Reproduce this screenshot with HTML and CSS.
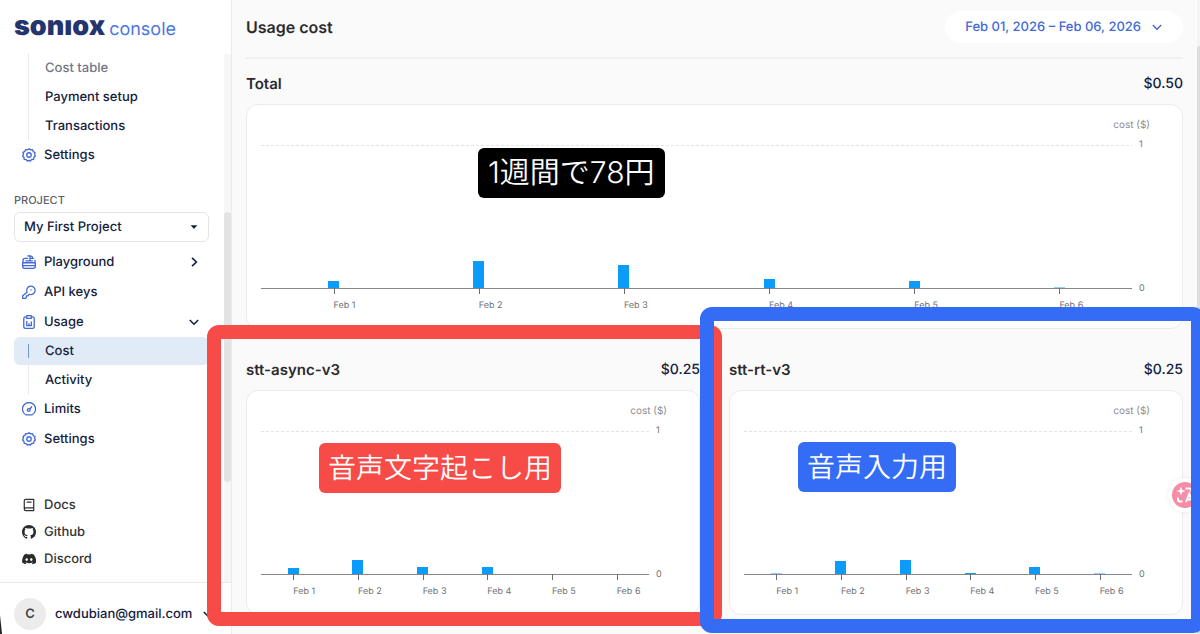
FILE: index.html
```html
<!DOCTYPE html>
<html lang="en">
<head>
<meta charset="utf-8">
<meta name="viewport" content="width=device-width, initial-scale=1">
<title>Soniox Console – Usage cost</title>
<link rel="stylesheet" href="styles.css">
</head>
<body>
<svg class="sprite" aria-hidden="true">
  <symbol id="i-gear" viewBox="0.500 0.500 15 15"><path d="M8 1.200 9.700 2.500 11.900 2.300 12.500 4.300 14.500 5.300 13.900 7.300 14.900 9.100 13.300 10.500 12.900 12.600 10.800 12.800 9.400 14.600 8 13.700 6.300 14.600 5 12.900 2.900 12.600 2.600 10.500 1.100 9 2.100 7.200 1.600 5.200 3.600 4.200 4.300 2.300 6.400 2.500Z"/><circle cx="8" cy="8" r="2.400"/></symbol>
  <symbol id="i-play" viewBox="0.500 0.500 15 15"><path d="M1.200 8.800h13.600v3.800q0 2.200-2.200 2.200H3.400q-2.200 0-2.200-2.200ZM1.200 11.900h13.600M1.600 8.600V6.400q0-2.200 2.200-2.200h2.600M14.400 8.600V6M4.600 6.700h7M9 6.500V2.200M6.600 1.500H9.400q2.200 0 2.800 2.400M9 4.200h3.600"/></symbol>
  <symbol id="i-key" viewBox="0.500 0.500 15 15"><path d="M6 8.200A4.500 4.500 0 1 1 8.400 10.400L6.600 12.200H5.200v1.400l-1 1.200H1.200v-2.800Z"/><path d="M10.200 5.800h.1"/></symbol>
  <symbol id="i-clip" viewBox="0.500 0.500 15 15"><path d="M5.400 2.600H4.200q-1.800 0-1.800 1.800V13q0 1.800 1.800 1.800h7.600q1.800 0 1.800-1.800V4.400q0-1.800-1.800-1.800h-1.200M5.600 1.200h4.800v3H5.600Z"/><path d="M5.600 7.400v4.400h5M8 11.600V9.800M10.500 11.600V8"/></symbol>
  <symbol id="i-gauge" viewBox="0.500 0.500 15 15"><path d="M4.600 14.200A7 7 0 1 1 11.400 14.200ZM9 8 10.800 5.600"/><circle cx="7.700" cy="9" r="1.500"/></symbol>
  <symbol id="i-docs" viewBox="0 0 16 16"><path d="M2.600 12.600V3.200q0-1.600 1.600-1.600h9.200v12.800H4.300q-1.700 0-1.700-1.600 0-1.600 1.700-1.600h9M5.800 4.600h4.600"/></symbol>
  <symbol id="i-github" viewBox="0 0 16 16"><path d="M8 0C3.580 0 0 3.580 0 8c0 3.540 2.290 6.530 5.470 7.590.4.070.55-.17.55-.38 0-.19-.01-.82-.01-1.490-2.010.37-2.530-.49-2.690-.94-.09-.23-.48-.94-.82-1.130-.28-.15-.68-.52-.01-.53.63-.01 1.080.58 1.230.82.72 1.210 1.870.87 2.330.66.07-.52.28-.87.51-1.070-1.780-.2-3.640-.89-3.640-3.950 0-.87.31-1.590.82-2.150-.08-.2-.36-1.020.08-2.120 0 0 .67-.21 2.200.82.64-.18 1.320-.27 2-.27s1.360.09 2 .27c1.530-1.040 2.200-.82 2.200-.82.44 1.100.16 1.920.08 2.120.51.56.82 1.270.82 2.150 0 3.070-1.870 3.750-3.650 3.950.29.25.54.73.54 1.480 0 1.070-.01 1.930-.01 2.200 0 .21.15.46.55.38A8 8 0 0 0 16 8c0-4.420-3.580-8-8-8Z"/></symbol>
  <symbol id="i-discord" viewBox="0 0 16 16"><path fill-rule="evenodd" d="M13.550 3.010A13.200 13.200 0 0 0 10.290 2l-.42.850a12.200 12.200 0 0 0-3.660 0L5.790 2a13.200 13.200 0 0 0-3.270 1.010C.46 6.100-.1 9.110.18 12.070a13.300 13.300 0 0 0 4 2.020l.86-1.400-1.270-.61.32-.25a9.500 9.500 0 0 0 8.130 0l.32.25-1.280.61.86 1.400a13.200 13.200 0 0 0 4-2.020c.33-3.430-.56-6.410-2.570-9.060ZM5.350 10.260c-.78 0-1.420-.72-1.420-1.600s.62-1.610 1.420-1.610 1.440.72 1.420 1.610c0 .88-.63 1.600-1.420 1.600Zm5.280 0c-.78 0-1.420-.72-1.420-1.600s.62-1.610 1.420-1.610 1.440.72 1.420 1.610c0 .88-.62 1.600-1.420 1.600Z"/></symbol>
  <symbol id="i-right" viewBox="0 0 12 12"><path d="M4 1.800 8.400 6 4 10.200"/></symbol>
  <symbol id="i-down" viewBox="0 0 12 12"><path d="M1.800 4 6 8.200 10.200 4"/></symbol>
  <symbol id="i-caret" viewBox="0 0 12 12"><path d="M2 4h8L6 8.500Z"/></symbol>
</svg>

<div class="page">
  <aside class="sidebar">
    <a class="brand" href="#"><span class="brand-name">sonıox</span><span class="brand-sub">console</span></a>
    <nav class="nav">
      <div class="sub">
        <a class="sub-item muted" href="#">Cost table</a>
        <a class="sub-item" href="#">Payment setup</a>
        <a class="sub-item" href="#">Transactions</a>
      </div>
      <a class="item" href="#"><svg class="icon"><use href="#i-gear"/></svg>Settings</a>

      <label class="group" for="project">PROJECT</label>
      <div class="picker">
        <select id="project"><option>My First Project</option></select>
        <svg class="caret"><use href="#i-caret"/></svg>
      </div>
      <a class="item" href="#"><svg class="icon"><use href="#i-play"/></svg>Playground<svg class="chev"><use href="#i-right"/></svg></a>
      <a class="item" href="#"><svg class="icon"><use href="#i-key"/></svg>API keys</a>
      <a class="item" href="#"><svg class="icon"><use href="#i-clip"/></svg>Usage<svg class="chev"><use href="#i-down"/></svg></a>
      <div class="sub">
        <a class="sub-item active" href="#">Cost</a>
        <a class="sub-item" href="#">Activity</a>
      </div>
      <a class="item" href="#"><svg class="icon"><use href="#i-gauge"/></svg>Limits</a>
      <a class="item" href="#"><svg class="icon"><use href="#i-gear"/></svg>Settings</a>
    </nav>
    <div class="links">
      <a class="link" href="#"><svg class="icon line"><use href="#i-docs"/></svg>Docs</a>
      <a class="link" href="#"><svg class="icon solid"><use href="#i-github"/></svg>Github</a>
      <a class="link" href="#"><svg class="icon solid"><use href="#i-discord"/></svg>Discord</a>
    </div>
    <button class="user" type="button"><span class="avatar">C</span><span>cwdubian@gmail.com</span><svg class="chev"><use href="#i-down"/></svg></button>
    <div class="track"><div class="thumb"></div></div>
  </aside>

  <main class="main">
    <header class="header">
      <h1>Usage cost</h1>
      <button class="range" type="button">Feb 01, 2026 – Feb 06, 2026<svg class="range-chev"><use href="#i-down"/></svg></button>
    </header>

    <div class="charts">
      <section class="panel wide">
        <div class="panel-head"><h2>Total</h2><span class="sum">$0.50</span></div>
        <div class="card">
          <div class="unit">cost ($)</div>
          <div class="plot">
            <div class="bars">
              <div class="slot"><div class="bar" style="height:5%"></div></div>
              <div class="slot"><div class="bar" style="height:19%"></div></div>
              <div class="slot"><div class="bar" style="height:16%"></div></div>
              <div class="slot"><div class="bar" style="height:6%"></div></div>
              <div class="slot"><div class="bar" style="height:5%"></div></div>
              <div class="slot"><div class="bar faint" style="height:1%"></div></div>
            </div>
            <div class="scale"><span>1</span><span>0</span></div>
            <div class="days"><span>Feb 1</span><span>Feb 2</span><span>Feb 3</span><span>Feb 4</span><span>Feb 5</span><span>Feb 6</span></div>
          </div>
        </div>
      </section>

      <section class="panel">
        <div class="panel-head"><h2>stt-async-v3</h2><span class="sum">$0.25</span></div>
        <div class="card">
          <div class="unit">cost ($)</div>
          <div class="plot">
            <div class="bars">
              <div class="slot"><div class="bar" style="height:4%"></div></div>
              <div class="slot"><div class="bar" style="height:10%"></div></div>
              <div class="slot"><div class="bar" style="height:5%"></div></div>
              <div class="slot"><div class="bar" style="height:5%"></div></div>
              <div class="slot"><div class="bar" style="height:0"></div></div>
              <div class="slot"><div class="bar" style="height:0"></div></div>
            </div>
            <div class="scale"><span>1</span><span>0</span></div>
            <div class="days"><span>Feb 1</span><span>Feb 2</span><span>Feb 3</span><span>Feb 4</span><span>Feb 5</span><span>Feb 6</span></div>
          </div>
        </div>
      </section>

      <section class="panel">
        <div class="panel-head"><h2>stt-rt-v3</h2><span class="sum">$0.25</span></div>
        <div class="card">
          <div class="unit">cost ($)</div>
          <div class="plot">
            <div class="bars">
              <div class="slot"><div class="bar faint" style="height:1%"></div></div>
              <div class="slot"><div class="bar" style="height:9%"></div></div>
              <div class="slot"><div class="bar" style="height:10%"></div></div>
              <div class="slot"><div class="bar" style="height:1%"></div></div>
              <div class="slot"><div class="bar" style="height:5%"></div></div>
              <div class="slot"><div class="bar faint" style="height:1%"></div></div>
            </div>
            <div class="scale"><span>1</span><span>0</span></div>
            <div class="days"><span>Feb 1</span><span>Feb 2</span><span>Feb 3</span><span>Feb 4</span><span>Feb 5</span><span>Feb 6</span></div>
          </div>
        </div>
      </section>
    </div>
  </main>

  <div class="page-track"><div class="page-thumb"></div></div>
  <button class="translate" type="button" aria-label="Translate">
    <svg viewBox="0 0 26 26"><circle cx="13" cy="13" r="13"/><path class="spark" d="M9 4.500 10.200 7.900 13.600 9 10.200 10.200 9 13.600 7.800 10.200 4.400 9 7.800 7.900Z"/><path d="M13.500 6.500h4q2 0 2 2v1.500M6 15.500v2q0 2 2 2h2.500M14 20 17.300 11.800 20.600 20M15.200 17.400h4.200"/></svg>
  </button>
  <div class="corner"></div>
  <div class="frame frame-red"></div>
  <div class="frame frame-blue"></div>
  <div class="note note-black" lang="ja">1週間で78円</div>
  <div class="note note-red" lang="ja">音声文字起こし用</div>
  <div class="note note-blue" lang="ja">音声入力用</div>
</div>
</body>
</html>
```

FILE: styles.css
```css
* { box-sizing: border-box; }
body {
  margin: 0;
  font-family: Inter, "Noto Sans", sans-serif;
  font-size: 13px;
  font-weight: 500;
  color: #14213d;
  background: #fafafa;
  text-rendering: geometricPrecision;
}
a { color: inherit; text-decoration: none; }
button, select { font: inherit; color: inherit; margin: 0; cursor: pointer; text-rendering: inherit; }
.sprite { position: absolute; width: 0; height: 0; }

.page { position: relative; display: flex; min-height: 100vh; overflow: hidden; }

/* Sidebar */
.sidebar {
  position: relative;
  flex: none;
  width: 232px;
  display: flex;
  flex-direction: column;
  background: #fff;
  border-right: 1px solid #ebebed;
}
.brand { display: flex; align-items: baseline; gap: 4px; height: 54px; padding: 10px 14px 0; line-height: 32px; }
.brand-name { font-size: 27px; font-weight: 900; color: #25346c; }
.brand-sub { font-size: 18px; font-weight: 400; color: #4d78dc; }
.nav { display: flex; flex-direction: column; padding: 0 22px 0 14px; }
.item { display: flex; align-items: center; gap: 8px; height: 30px; padding: 0 9px 0 8px; }
.icon { width: 14px; height: 14px; fill: none; stroke: #4269d6; stroke-width: 1.4; stroke-linejoin: round; stroke-linecap: round; }
.icon.line { stroke: #333; }
.icon.solid { fill: #2b2b2b; stroke: none; }
.chev { width: 12px; height: 12px; margin-left: auto; fill: none; stroke: #14213d; stroke-width: 1.6; }
.sub {
  display: flex;
  flex-direction: column;
  gap: 1px;
  background: linear-gradient(#e6e7ea, #e6e7ea) 14px 0 / 1px 100% no-repeat;
}
.sub-item { display: flex; align-items: center; height: 28px; padding-left: 31px; border-radius: 6px; }
.sub-item.muted { color: #717784; }
.sub-item.active { background: linear-gradient(#6f9bd4, #6f9bd4) 14px 7px / 1px 14px no-repeat #e1ebf7; }
.group { margin: 22px 0 4px; font-size: 11px; line-height: 16px; color: #5d6068; }
.picker { position: relative; margin-bottom: 5px; }
.picker select { appearance: none; display: block; width: 100%; height: 30px; padding: 0 9px; border: 1px solid #e4e5e9; border-radius: 6px; background: #fff; }
.caret { position: absolute; top: 10px; right: 10px; width: 10px; height: 10px; fill: #14213d; pointer-events: none; }
.links { margin-top: auto; padding: 0 22px 10px; border-bottom: 1px solid #e9e9eb; }
.link { display: flex; align-items: center; gap: 8px; height: 27px; color: #333; }
.user { display: flex; align-items: center; gap: 9px; padding: 15px 17px 4px 14px; border: 0; background: none; }
.avatar { display: grid; place-items: center; width: 32px; height: 32px; border-radius: 50%; background: #ececec; color: #444; font-weight: 600; }
.track { position: absolute; top: 54px; right: 0; bottom: 52px; width: 7px; background: #f6f6f7; }
.thumb { height: 270px; margin-top: 158px; border-radius: 4px; background: #e2e3e4; }

/* Main */
.main { flex: 1; min-width: 0; padding: 0 17px 0 14px; }
.header { display: flex; align-items: center; justify-content: space-between; padding: 11px 0 14px; border-bottom: 2px solid #f0f0f1; }
h1, h2 { margin: 0; font-weight: 600; color: #2b2b2f; }
h1 { font-size: 16px; }
h2 { font-size: 15px; }
.range { display: flex; align-items: center; gap: 10px; height: 32px; padding: 0 20px; border: 0; border-radius: 16px; background: #fff; color: #4269d6; }
.range-chev { width: 12px; height: 12px; fill: none; stroke: #4269d6; stroke-width: 1.4; }
.charts { display: grid; grid-template-columns: 1fr 1fr; gap: 16px 29px; }
.wide { grid-column: 1 / -1; }
.panel-head { display: flex; justify-content: space-between; padding: 15px 0 10px; line-height: 20px; }
.sum { font-size: 14px; }
.card { padding: 12px 32px 14px 14px; border: 1px solid #ebebed; border-radius: 12px; background: #fff; font-size: 9px; font-weight: 400; line-height: 16px; color: #6f7175; }
.unit { margin-bottom: 12px; font-size: 10px; text-align: right; color: #8a8c90; }
.plot { display: grid; grid-template-columns: 1fr 11px; column-gap: 7px; }
.bars {
  display: grid;
  grid-template-columns: repeat(6, 1fr);
  height: 144px;
  border-bottom: 1px solid #85878a;
  background: repeating-linear-gradient(90deg, #e2e3e5 0 3px, transparent 3px 5px) 0 0 / 100% 1px no-repeat;
}
.slot { position: relative; display: flex; align-items: flex-end; justify-content: center; }
.slot::after { content: ""; position: absolute; left: 50%; top: 100%; width: 1px; height: 6px; background: #6b6e73; }
.bar { width: 11px; background: #0a9bfb; }
.bar.faint { opacity: .45; }
.scale { display: flex; flex-direction: column; justify-content: space-between; margin: -8px 0; }
.days { display: grid; grid-template-columns: repeat(6, 1fr); margin-top: 9px; }
.days span { padding-left: 50%; white-space: nowrap; }

/* Overlays */
.page-track { position: absolute; top: 0; right: 0; bottom: 0; width: 3px; background: #f4f4f5; }
.page-thumb { height: 100%; margin-top: 46px; background: #dddddf; border-radius: 3px 0 0 0; }
.translate { position: absolute; top: 478px; right: -2px; width: 34px; height: 34px; padding: 4px; border: 0; border-radius: 50%; background: #fff; box-shadow: 0 0 4px rgba(0, 0, 0, .08); }
.translate svg { display: block; fill: none; stroke: #fff; stroke-width: 2; }
.translate circle { fill: #f58ca8; stroke: none; }
.translate .spark { fill: #fff; stroke: none; }
.corner { position: absolute; left: 0; bottom: 0; width: 2px; height: 19px; background: #222; clip-path: polygon(0 0, 100% 100%, 0 100%); }
.frame { position: absolute; border: 14px solid; border-radius: 12px; pointer-events: none; }
.frame-red { left: 207px; top: 325px; width: 515px; height: 301px; border-color: #f64b46; }
.frame-blue { left: 700px; top: 307px; right: -5px; height: 326px; border-color: #346cf5; }
.note { position: absolute; padding: 0 9px; border-radius: 6px; font-family: Inter, "Noto Sans CJK JP", sans-serif; font-size: 28px; font-weight: 350; line-height: 50px; color: #fff; white-space: nowrap; }
.note-black { left: 478px; top: 148px; padding: 0 10px; font-size: 30px; background: #000; }
.note-red { left: 319px; top: 443px; background: #f64b46; }
.note-blue { left: 798px; top: 442px; background: #346cf5; }
```
